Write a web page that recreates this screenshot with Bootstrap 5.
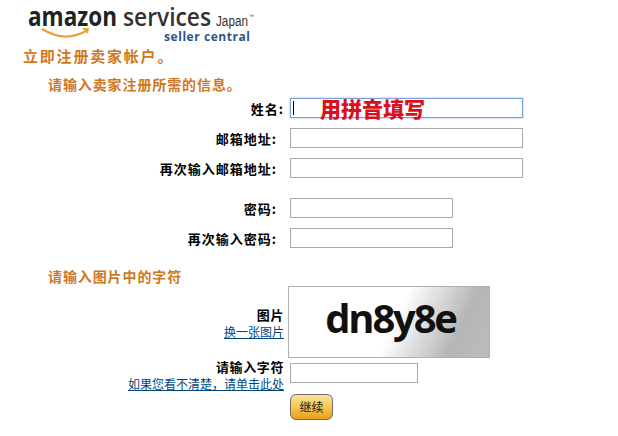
<!DOCTYPE html>
<html lang="zh">
<head>
<meta charset="utf-8">
<title>Seller Central</title>
<link rel="stylesheet" href="https://cdn.jsdelivr.net/npm/bootstrap@5.3.0/dist/css/bootstrap.min.css">
<style>
html,body{background:#fff;overflow:hidden}
body{font-family:"Noto Sans CJK SC","Liberation Sans",sans-serif;font-size:12px;color:#000}
.brand-wrap{padding:9px 0 0 28px;height:46px}
.brand-svg{display:block;overflow:visible}
.brand-a{font:700 26px "Open Sans","Liberation Sans",sans-serif;fill:#222}
.brand-s{font:600 25px "Open Sans","Liberation Sans",sans-serif;fill:#333}
.brand-j{font:400 14px "Liberation Sans",sans-serif;fill:#333}
.brand-t{font:400 5px "Liberation Sans",sans-serif;fill:#333}
.brand-c{font:700 12px "Open Sans","Liberation Sans",sans-serif;fill:#2f5583}
.head-main{font-size:15px;font-weight:700;color:#d0781e;line-height:20px;margin:0 0 0 23px;letter-spacing:1.8px}
.head-sub{font-size:14px;font-weight:700;color:#d0781e;line-height:20px;margin:8px 0 0 48px;letter-spacing:.9px}
.head-cap{margin-top:18px}
.form-rows{margin-top:4px}
.form-row{display:flex;align-items:center;height:20px;margin-bottom:10px}
.form-row-gap{margin-top:20px}
.lab{width:284px;flex:none;text-align:right;font-weight:700;font-size:13px;line-height:17px;letter-spacing:1px;margin:0;padding-right:7px}
.lab-near{padding-right:0}
.fld{height:20px;border:1px solid #a9a9a9;background:#fff;flex:none;margin-left:6px;border-radius:0;padding:0 2px;font-size:12px}
.w-long{width:233px}
.w-mid{width:163px}
.w-short{width:128px}
.fld-focus{border-color:#7ba1d8;box-shadow:0 0 2px #9dbcec;position:relative;display:flex;align-items:center}
.caret-bar{width:1px;height:14px;background:#000}
.hint{position:absolute;left:29px;top:-3px;font-size:21px;line-height:24px;font-weight:900;color:#d8101c;white-space:nowrap}
.cap-row{display:flex;height:72px}
.cap-lab,.conf-lab{width:284px;flex:none;text-align:right;font-size:13px;line-height:17px;font-weight:700;letter-spacing:.6px}
.cap-lab{padding-top:20px}
.conf-lab{padding-top:3px}
.cap-lab a,.conf-lab a{display:block;font-size:12px;font-weight:400;color:#00477f;letter-spacing:0;text-decoration:underline}
.cap-img{width:202px;height:72px;margin-left:4px;border:1px solid #b0b0b0;background:linear-gradient(115deg,#fff 52%,#b6b6b6 82%,#bcbcbc);display:flex;align-items:center;justify-content:center;font:700 40px/1 "Open Sans","Liberation Sans",sans-serif;color:#111;letter-spacing:-2.2px;padding-left:3px;padding-bottom:9px}
.conf-row{display:flex;align-items:center;margin-top:5px;height:20px}
.go-wrap{margin:11px 0 0 290px}
.go-btn{width:43px;height:26px;padding:0;border:1px solid #6c6c6c;border-radius:6px;font-size:12px;line-height:24px;color:#222;background:linear-gradient(#fbe3a0,#f9c74f 50%,#e89f1a)}
</style>
</head>
<body>
<div class="brand-wrap">
<svg class="brand-svg" width="230" height="36" viewBox="0 0 230 36" role="img" aria-label="amazon services Japan seller central">
<text class="brand-a" x="0" y="17" textLength="89" lengthAdjust="spacingAndGlyphs">amazon</text>
<text class="brand-s" x="95" y="17" textLength="88" lengthAdjust="spacingAndGlyphs">services</text>
<text class="brand-j" x="188" y="17" textLength="32" lengthAdjust="spacingAndGlyphs">Japan</text>
<text class="brand-t" x="221" y="9">™</text>
<path d="M14 20 Q37 34 58 22" fill="none" stroke="#e8a33a" stroke-width="2.2"/>
<path d="M54 19 L61 19 L60 25 Z" fill="#e8a33a"/>
<text class="brand-c" x="136" y="32" textLength="86" lengthAdjust="spacing">seller central</text>
</svg>
</div>
<h1 class="head-main">立即注册卖家帐户。</h1>
<h2 class="head-sub">请输入卖家注册所需的信息。</h2>
<form class="form-rows" onsubmit="return false">
<div class="form-row">
<label class="lab lab-near">姓名:</label>
<div class="fld w-long fld-focus"><span class="caret-bar"></span><span class="hint">用拼音填写</span></div>
</div>
<div class="form-row"><label class="lab">邮箱地址:</label><input class="fld w-long" type="text"></div>
<div class="form-row"><label class="lab">再次输入邮箱地址:</label><input class="fld w-long" type="text"></div>
<div class="form-row form-row-gap"><label class="lab">密码:</label><input class="fld w-mid" type="password"></div>
<div class="form-row"><label class="lab">再次输入密码:</label><input class="fld w-mid" type="password"></div>
<h2 class="head-sub head-cap">请输入图片中的字符</h2>
<div class="cap-row">
<div class="cap-lab">图片<a href="#">换一张图片</a></div>
<div class="cap-img">dn8y8e</div>
</div>
<div class="conf-row">
<div class="conf-lab">请输入字符<a href="#">如果您看不清楚&#xFF0C;请单击此处</a></div>
<input class="fld w-short" type="text">
</div>
<div class="go-wrap"><button class="btn go-btn" type="submit">继续</button></div>
</form>
</body>
</html>
